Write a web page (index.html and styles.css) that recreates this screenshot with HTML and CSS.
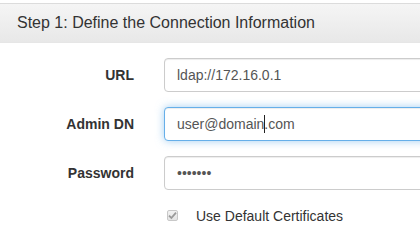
FILE: index.html
```html
<!DOCTYPE html>
<html lang="en">
<head>
  <meta charset="UTF-8">
  <title>LDAP Connection</title>
  <link rel="stylesheet" href="styles.css">
</head>
<body>
  <div class="panel">
    <div class="panel-heading">
      <h3 class="panel-title">Step 1: Define the Connection Information</h3>
    </div>
    <div class="panel-body">
      <form class="form-horizontal">
        <div class="form-group">
          <label for="url" class="control-label">URL</label>
          <div class="input-wrap">
            <input type="text" id="url" class="form-control" value="ldap://172.16.0.1">
          </div>
        </div>
        <div class="form-group">
          <label for="adminDn" class="control-label">Admin DN</label>
          <div class="input-wrap">
            <input type="text" id="adminDn" class="form-control focused" value="user@domain.com">
            <span class="caret"></span>
          </div>
        </div>
        <div class="form-group">
          <label for="senha" class="control-label">Password</label>
          <div class="input-wrap">
            <input type="password" id="senha" class="form-control" value="1234567">
          </div>
        </div>
        <div class="form-group">
          <span></span>
          <div class="checkbox">
            <span class="check-box">
              <svg width="9" height="9" viewBox="0 0 9 9"><path d="M1 4.6 L3.4 7 L8 1.6" fill="none" stroke="#9a9a9a" stroke-width="1.8"/></svg>
            </span>
            <label>Use Default Certificates</label>
          </div>
        </div>
      </form>
    </div>
  </div>
</body>
</html>
```

FILE: styles.css
```css
body {
  font-family: 'Liberation Sans', Arial, sans-serif;
  font-size: 14px;
  color: #333;
  margin: 0;
  padding: 0;
  background: #fff;
}

.panel {
  margin-top: 3px;
  width: 100%;
  overflow: hidden;
}

.panel-heading {
  padding: 10px 17px;
  border-top: 1px solid #dcdcdc;
  border-bottom: 1px solid #e6e6e6;
  background: linear-gradient(to bottom, #f5f5f5 0, #e8e8e8 100%);
}

.panel-title {
  margin: 0;
  font-size: 16px;
  font-weight: normal;
  line-height: 1.1;
  color: #333;
}

.panel-body {
  padding: 15px 0 10px;
}

.form-group {
  display: grid;
  grid-template-columns: 134px 1fr;
  column-gap: 30px;
  align-items: start;
  margin-bottom: 15px;
}

.form-group:last-child {
  margin-bottom: 0;
}

.control-label {
  text-align: right;
  font-weight: bold;
  padding-top: 7px;
  line-height: 20px;
}

.input-wrap {
  position: relative;
  margin-right: -20px;
}

.form-control {
  box-sizing: border-box;
  display: block;
  width: 100%;
  height: 34px;
  padding: 6px 12px;
  font-family: inherit;
  font-size: 14px;
  line-height: 20px;
  color: #555;
  background: #fff;
  border: 1px solid #ccc;
  border-radius: 4px;
  box-shadow: inset 0 1px 1px rgba(0, 0, 0, 0.075);
  outline: none;
}

.form-control.focused {
  border-color: #66afe9;
  box-shadow: inset 0 1px 1px rgba(0, 0, 0, 0.075), 0 0 8px rgba(102, 175, 233, 0.6);
}

.caret {
  position: absolute;
  left: 100px;
  top: 8px;
  width: 1px;
  height: 18px;
  background: #222;
}

.checkbox {
  display: flex;
  align-items: center;
  padding-top: 1px;
  line-height: 20px;
}

.check-box {
  box-sizing: border-box;
  width: 11px;
  height: 11px;
  margin-left: 3px;
  border: 1px solid #c8c8c8;
  border-radius: 2px;
  background: linear-gradient(to bottom, #f2f2f2, #e4e4e4);
  display: flex;
  align-items: center;
  justify-content: center;
}

.checkbox label {
  margin-left: 18px;
}
```
